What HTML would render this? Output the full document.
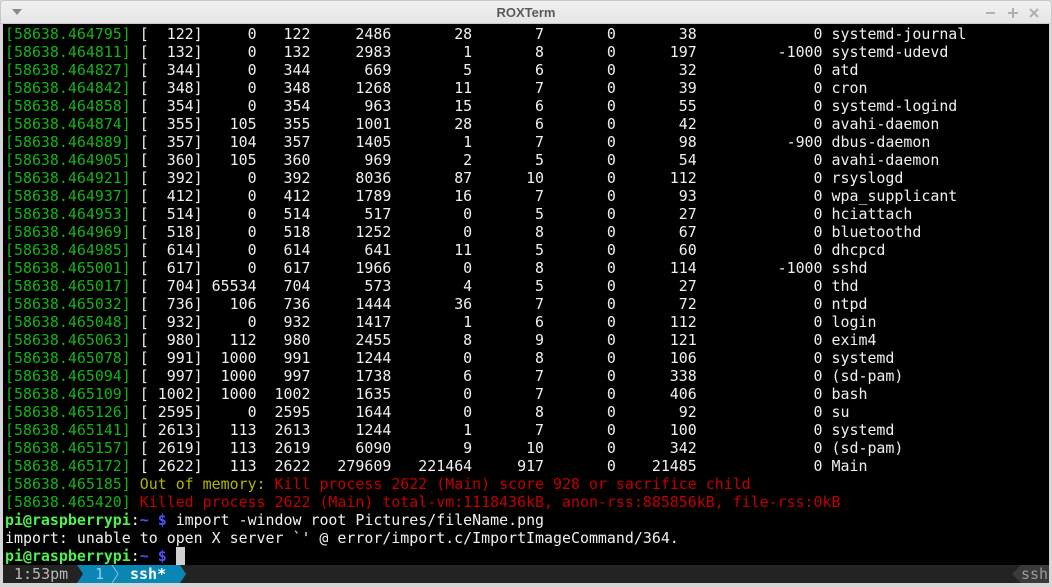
<!DOCTYPE html>
<html><head><meta charset="utf-8"><style>
body{margin:0;width:1052px;height:587px;background:#d6d6d6;overflow:hidden;position:relative;font-family:"DejaVu Sans Mono","Liberation Mono",monospace}
#tb{position:absolute;left:0;top:0;width:1052px;height:24px;background:linear-gradient(#f2f2f2,#e4e4e4);border-radius:4px 4px 0 0;box-shadow:inset 0 0 0 1px #c8c8c8}
#tb .t{position:absolute;left:0;right:0;top:5px;text-align:center;font:bold 13px "Liberation Sans",sans-serif;color:#5a5a5a}
#term{position:absolute;left:3px;top:24px;width:1046px;height:541px;background:#000}
.r{position:absolute;left:2px;margin-top:1px;height:18px;line-height:18px;font-size:14.93px;white-space:pre;color:#f0f0f0}
.g{color:#13b413}.y{color:#b5b500}.rd{color:#c20000}.pg{color:#4ef04e;font-weight:bold}.pb{color:#5050ff;font-weight:bold}
#sb{position:absolute;left:3px;top:565px;width:1046px;height:18px;background:#232323;font-size:15px;line-height:18px}
</style></head><body>
<div id="tb"><svg style="position:absolute;left:12px;top:9px" width="11" height="7"><path d="M0 0H10L5 6Z" fill="#8a8a8a"/></svg><div class="t">ROXTerm</div>
<svg style="position:absolute;left:984px;top:7px" width="66" height="11"><path d="M2 6H11" stroke="#b0b0b0" stroke-width="2"/><path d="M24 6H34M29 1V11" stroke="#b0b0b0" stroke-width="2"/><path d="M46 2L54 10M54 2L46 10" stroke="#b0b0b0" stroke-width="2"/></svg></div>
<div id="term">
<div class="r" style="top:0"><span class="g">[58638.464795]</span> [  122]     0   122     2486       28       7       0       38             0 systemd-journal</div>
<div class="r" style="top:18px"><span class="g">[58638.464811]</span> [  132]     0   132     2983        1       8       0      197         -1000 systemd-udevd</div>
<div class="r" style="top:36px"><span class="g">[58638.464827]</span> [  344]     0   344      669        5       6       0       32             0 atd</div>
<div class="r" style="top:54px"><span class="g">[58638.464842]</span> [  348]     0   348     1268       11       7       0       39             0 cron</div>
<div class="r" style="top:72px"><span class="g">[58638.464858]</span> [  354]     0   354      963       15       6       0       55             0 systemd-logind</div>
<div class="r" style="top:90px"><span class="g">[58638.464874]</span> [  355]   105   355     1001       28       6       0       42             0 avahi-daemon</div>
<div class="r" style="top:108px"><span class="g">[58638.464889]</span> [  357]   104   357     1405        1       7       0       98          -900 dbus-daemon</div>
<div class="r" style="top:126px"><span class="g">[58638.464905]</span> [  360]   105   360      969        2       5       0       54             0 avahi-daemon</div>
<div class="r" style="top:144px"><span class="g">[58638.464921]</span> [  392]     0   392     8036       87      10       0      112             0 rsyslogd</div>
<div class="r" style="top:162px"><span class="g">[58638.464937]</span> [  412]     0   412     1789       16       7       0       93             0 wpa_supplicant</div>
<div class="r" style="top:180px"><span class="g">[58638.464953]</span> [  514]     0   514      517        0       5       0       27             0 hciattach</div>
<div class="r" style="top:198px"><span class="g">[58638.464969]</span> [  518]     0   518     1252        0       8       0       67             0 bluetoothd</div>
<div class="r" style="top:216px"><span class="g">[58638.464985]</span> [  614]     0   614      641       11       5       0       60             0 dhcpcd</div>
<div class="r" style="top:234px"><span class="g">[58638.465001]</span> [  617]     0   617     1966        0       8       0      114         -1000 sshd</div>
<div class="r" style="top:252px"><span class="g">[58638.465017]</span> [  704] 65534   704      573        4       5       0       27             0 thd</div>
<div class="r" style="top:270px"><span class="g">[58638.465032]</span> [  736]   106   736     1444       36       7       0       72             0 ntpd</div>
<div class="r" style="top:288px"><span class="g">[58638.465048]</span> [  932]     0   932     1417        1       6       0      112             0 login</div>
<div class="r" style="top:306px"><span class="g">[58638.465063]</span> [  980]   112   980     2455        8       9       0      121             0 exim4</div>
<div class="r" style="top:324px"><span class="g">[58638.465078]</span> [  991]  1000   991     1244        0       8       0      106             0 systemd</div>
<div class="r" style="top:342px"><span class="g">[58638.465094]</span> [  997]  1000   997     1738        6       7       0      338             0 (sd-pam)</div>
<div class="r" style="top:360px"><span class="g">[58638.465109]</span> [ 1002]  1000  1002     1635        0       7       0      406             0 bash</div>
<div class="r" style="top:378px"><span class="g">[58638.465126]</span> [ 2595]     0  2595     1644        0       8       0       92             0 su</div>
<div class="r" style="top:396px"><span class="g">[58638.465141]</span> [ 2613]   113  2613     1244        1       7       0      100             0 systemd</div>
<div class="r" style="top:414px"><span class="g">[58638.465157]</span> [ 2619]   113  2619     6090        9      10       0      342             0 (sd-pam)</div>
<div class="r" style="top:432px"><span class="g">[58638.465172]</span> [ 2622]   113  2622   279609   221464     917       0    21485             0 Main</div>
<div class="r" style="top:450px"><span class="g">[58638.465185]</span> <span class="y">Out of memory:</span><span class="rd"> Kill process 2622 (Main) score 928 or sacrifice child</span></div>
<div class="r" style="top:468px"><span class="g">[58638.465420]</span> <span class="rd">Killed process 2622 (Main) total-vm:1118436kB, anon-rss:885856kB, file-rss:0kB</span></div>
<div class="r" style="top:486px"><span class="pg">pi@raspberrypi</span>:<span class="pb">~ $</span> import -window root Pictures/fileName.png</div>
<div class="r" style="top:504px">import: unable to open X server `' @ error/import.c/ImportImageCommand/364.</div>
<div class="r" style="top:522px"><span class="pg">pi@raspberrypi</span>:<span class="pb">~ $</span> <span style="background:#d0d0d0"> </span></div>
</div>
<div id="sb">
<span style="position:absolute;left:11px;top:0;color:#b8b8b8">1:53pm</span>
<svg style="position:absolute;left:74px;top:0" width="110" height="18"><path d="M0 0H103L109 9L103 18H0L6 9Z" fill="#0a86b4"/><path d="M35 0L41 9L35 18" fill="none" stroke="#7fc6e4" stroke-width="1"/></svg>
<span style="position:absolute;left:92px;top:0;color:#8fd0ee">1</span>
<span style="position:absolute;left:127px;top:0;color:#fff;font-weight:bold">ssh*</span>
<svg style="position:absolute;left:1008px;top:0" width="38" height="18"><path d="M10 0H38V18H10L1 9Z" fill="#3a3a3a"/></svg>
<span style="position:absolute;left:1018px;top:0;color:#9a9a9a">ssh</span>
</div>
</body></html>
